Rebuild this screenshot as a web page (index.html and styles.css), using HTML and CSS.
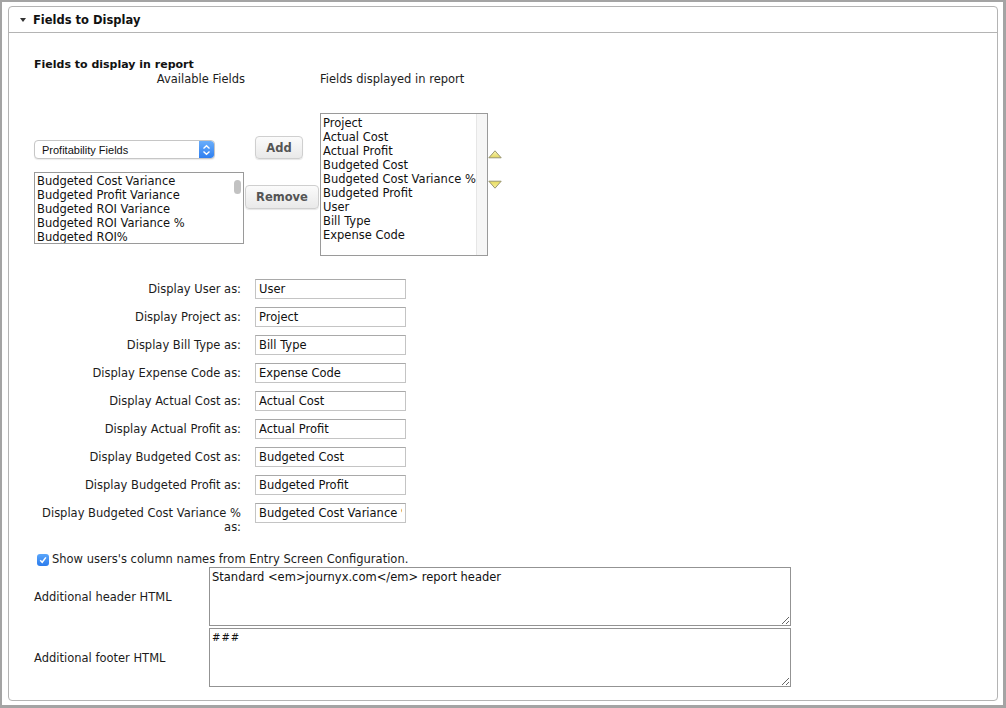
FILE: index.html
```html
<!DOCTYPE html>
<html>
<head>
<meta charset="utf-8">
<link rel="stylesheet" href="styles.css">
</head>
<body>
<div class="frame">
  <div class="panel">
    <div class="panel-head"><span class="tri"></span><span>Fields to Display</span></div>
    <div class="panel-body">
      <div class="title">Fields to display in report</div>
      <div class="transfer">
        <div class="hdr hdr-left">Available Fields</div>
        <div></div>
        <div class="hdr">Fields displayed in report</div>
        <div></div>

        <div class="col-left">
          <div class="select">
            <span class="select-text">Profitability Fields</span>
            <span class="select-btn">
              <svg width="9" height="12" viewBox="0 0 9 12"><path d="M1.5 4.5 L4.5 1.8 L7.5 4.5" fill="none" stroke="#fff" stroke-width="1.4"/><path d="M1.5 7.5 L4.5 10.2 L7.5 7.5" fill="none" stroke="#fff" stroke-width="1.4"/></svg>
            </span>
          </div>
          <div class="listbox list-avail">
            <div class="opt">Budgeted Cost Variance</div>
            <div class="opt">Budgeted Profit Variance</div>
            <div class="opt">Budgeted ROI Variance</div>
            <div class="opt">Budgeted ROI Variance %</div>
            <div class="opt">Budgeted ROI%</div>
            <div class="thumb"></div>
          </div>
        </div>
        <div class="col-btns">
          <div class="btn btn-add">Add</div>
          <div class="btn btn-remove">Remove</div>
        </div>
        <div class="listbox list-shown">
          <div class="opt">Project</div>
          <div class="opt">Actual Cost</div>
          <div class="opt">Actual Profit</div>
          <div class="opt">Budgeted Cost</div>
          <div class="opt">Budgeted Cost Variance %</div>
          <div class="opt">Budgeted Profit</div>
          <div class="opt">User</div>
          <div class="opt">Bill Type</div>
          <div class="opt">Expense Code</div>
          <div class="track"></div>
        </div>
        <div class="col-arrows">
          <svg class="arrow arrow-up" width="14" height="9" viewBox="0 0 14 9">
            <defs><linearGradient id="gu" x1="0" y1="0" x2="0" y2="1"><stop offset="0" stop-color="#fbf6b4"/><stop offset="1" stop-color="#e2d660"/></linearGradient></defs>
            <polygon points="7,0.8 13.2,7.8 0.8,7.8" fill="url(#gu)" stroke="#8e8c6a" stroke-width="0.9"/>
          </svg>
          <svg class="arrow arrow-down" width="14" height="9" viewBox="0 0 14 9">
            <defs><linearGradient id="gd" x1="0" y1="0" x2="0" y2="1"><stop offset="0" stop-color="#e8dc5e"/><stop offset="1" stop-color="#f7f0a0"/></linearGradient></defs>
            <polygon points="0.8,1.2 13.2,1.2 7,8.2" fill="url(#gd)" stroke="#8e8c6a" stroke-width="0.9"/>
          </svg>
        </div>
      </div>

      <div class="rows">
        <div class="lbl">Display User as:</div><input class="txt" type="text" value="User">
        <div class="lbl">Display Project as:</div><input class="txt" type="text" value="Project">
        <div class="lbl">Display Bill Type as:</div><input class="txt" type="text" value="Bill Type">
        <div class="lbl">Display Expense Code as:</div><input class="txt" type="text" value="Expense Code">
        <div class="lbl">Display Actual Cost as:</div><input class="txt" type="text" value="Actual Cost">
        <div class="lbl">Display Actual Profit as:</div><input class="txt" type="text" value="Actual Profit">
        <div class="lbl">Display Budgeted Cost as:</div><input class="txt" type="text" value="Budgeted Cost">
        <div class="lbl">Display Budgeted Profit as:</div><input class="txt" type="text" value="Budgeted Profit">
        <div class="lbl"><span class="nw">Display Budgeted Cost Variance %</span> as:</div><input class="txt" type="text" value="Budgeted Cost Variance %">
      </div>

      <div class="check-row">
        <span class="checkbox">
          <svg width="8" height="8" viewBox="0 0 8 8"><path d="M1.2 4.3 L3.2 6.3 L6.9 1.4" fill="none" stroke="#fff" stroke-width="1.5"/></svg>
        </span>
        <span>Show users's column names from Entry Screen Configuration.</span>
      </div>

      <div class="html-rows">
        <div class="hlbl">Additional header HTML</div>
        <textarea class="area">Standard &lt;em&gt;journyx.com&lt;/em&gt; report header</textarea>
        <div class="hlbl">Additional footer HTML</div>
        <textarea class="area area-foot">###</textarea>
      </div>
    </div>
  </div>
</div>
</body>
</html>
```

FILE: styles.css
```css
* { box-sizing: border-box; }
html, body { margin: 0; padding: 0; }
body {
  background: #a4a4a4;
  width: 1006px;
  height: 708px;
  overflow: hidden;
  font-family: "DejaVu Sans", Verdana, sans-serif;
  font-size: 11.5px;
  color: #1c1c1c;
}
.frame {
  margin: 2px 3px 0 2px;
  height: 703px;
  background: #fff;
  padding: 4px 0 0 6px;
}
.panel {
  width: 990px;
  height: 695px;
  border: 1px solid #b4b4b4;
  border-radius: 4px;
}
.panel-head {
  height: 26px;
  border-bottom: 1px solid #b4b4b4;
  display: flex;
  align-items: center;
  padding-left: 11px;
  font-weight: bold;
  font-size: 11.5px;
  color: #111;
}
.tri {
  width: 0; height: 0;
  border-left: 3.5px solid transparent;
  border-right: 3.5px solid transparent;
  border-top: 4px solid #333;
  margin-right: 7px;
}
.panel-body {
  padding: 0 25px;
}
.title {
  margin-top: 25px;
  font-weight: bold;
  font-size: 11px;
  line-height: 13px;
  color: #111;
}
.transfer {
  display: grid;
  grid-template-columns: 210px 76px 168px 14px;
  align-items: start;
}
.hdr { line-height: 13px; margin-top: 2px; margin-bottom: 27px; }
.hdr-left { text-align: right; margin-right: -1px; }
.col-left { padding-top: 27px; }
.select {
  width: 181px;
  height: 19px;
  border: 1px solid #c6c6c6;
  border-radius: 4px;
  box-shadow: 0 1px 1px rgba(0,0,0,0.08);
  display: flex;
  align-items: center;
  justify-content: space-between;
  background: #fff;
  overflow: hidden;
}
.select-text {
  font-family: "Liberation Sans", Arial, sans-serif;
  font-size: 11px;
  padding-left: 7px;
  color: #111;
}
.select-btn {
  width: 15px;
  height: 17px;
  background: linear-gradient(#6aaefb, #2f7ff0);
  display: flex;
  align-items: center;
  justify-content: center;
  border-radius: 0 3px 3px 0;
}
.listbox {
  position: relative;
  border: 1px solid #9a9a9a;
  background: #fff;
  line-height: 14px;
  color: #111;
  overflow: hidden;
  white-space: nowrap;
}
.list-avail {
  margin-top: 13px;
  width: 210px;
  height: 72px;
  padding: 1px 0 0 2px;
}
.thumb {
  position: absolute;
  right: 2px;
  top: 7px;
  width: 7px;
  height: 14px;
  border-radius: 4px;
  background: #c2c2c2;
}
.list-shown {
  width: 168px;
  height: 143px;
  padding: 2px 0 0 2px;
}
.track {
  position: absolute;
  right: 0;
  top: 0;
  bottom: 0;
  width: 11px;
  background: #f6f6f6;
  border-left: 1px solid #e6e6e6;
}
.col-btns {
  display: flex;
  flex-direction: column;
  align-items: flex-start;
}
.btn {
  font-weight: bold;
  font-size: 11.5px;
  color: #555;
  border: 1px solid #cfcfcf;
  border-radius: 4px;
  background: linear-gradient(#fbfbfb, #e9e9e9);
  box-shadow: 0 1px 1px rgba(0,0,0,0.1);
  display: flex;
  align-items: center;
  justify-content: center;
}
.btn-add { margin-top: 23px; margin-left: 11px; width: 48px; height: 23px; }
.btn-remove { margin-top: 26px; margin-left: 1px; width: 74px; height: 24px; }
.col-arrows {
  display: flex;
  flex-direction: column;
}
.arrow { display: block; }
.arrow-up { margin-top: 37px; }
.arrow-down { margin-top: 21px; }

.rows {
  margin-top: 23px;
  display: grid;
  grid-template-columns: 207px 151px;
  column-gap: 14px;
  row-gap: 8px;
  align-items: start;
}
.lbl {
  text-align: right;
  line-height: 14px;
  padding-top: 3px;
}
.nw { white-space: nowrap; }
.txt {
  width: 151px;
  height: 20px;
  margin: 0;
  border: 1px solid #c4c4c4;
  border-top-color: #a9a9a9;
  padding: 0 3px;
  font-family: "DejaVu Sans", Verdana, sans-serif;
  font-size: 11.5px;
  color: #111;
  background: #fff;
  outline: none;
}
.check-row {
  margin-top: 17px;
  height: 16px;
  display: flex;
  align-items: center;
  padding-left: 3px;
}
.checkbox {
  width: 12px;
  height: 12px;
  border-radius: 3px;
  background: linear-gradient(#5aa6fb, #2b7bec);
  display: flex;
  align-items: center;
  justify-content: center;
  margin-right: 3px;
  margin-top: 2px;
}
.html-rows {
  display: grid;
  grid-template-columns: 175px 582px;
  row-gap: 2px;
  align-items: center;
}
.hlbl { line-height: 14px; padding-top: 1px; }
.area {
  display: block;
  width: 582px;
  height: 59px;
  margin: 0;
  border: 1px solid #939393;
  padding: 2px 2px;
  font-family: "DejaVu Sans", Verdana, sans-serif;
  font-size: 11.5px;
  line-height: 14px;
  color: #111;
  resize: both;
  outline: none;
}
.area-foot { font-size: 10px; letter-spacing: 1px; }
```
